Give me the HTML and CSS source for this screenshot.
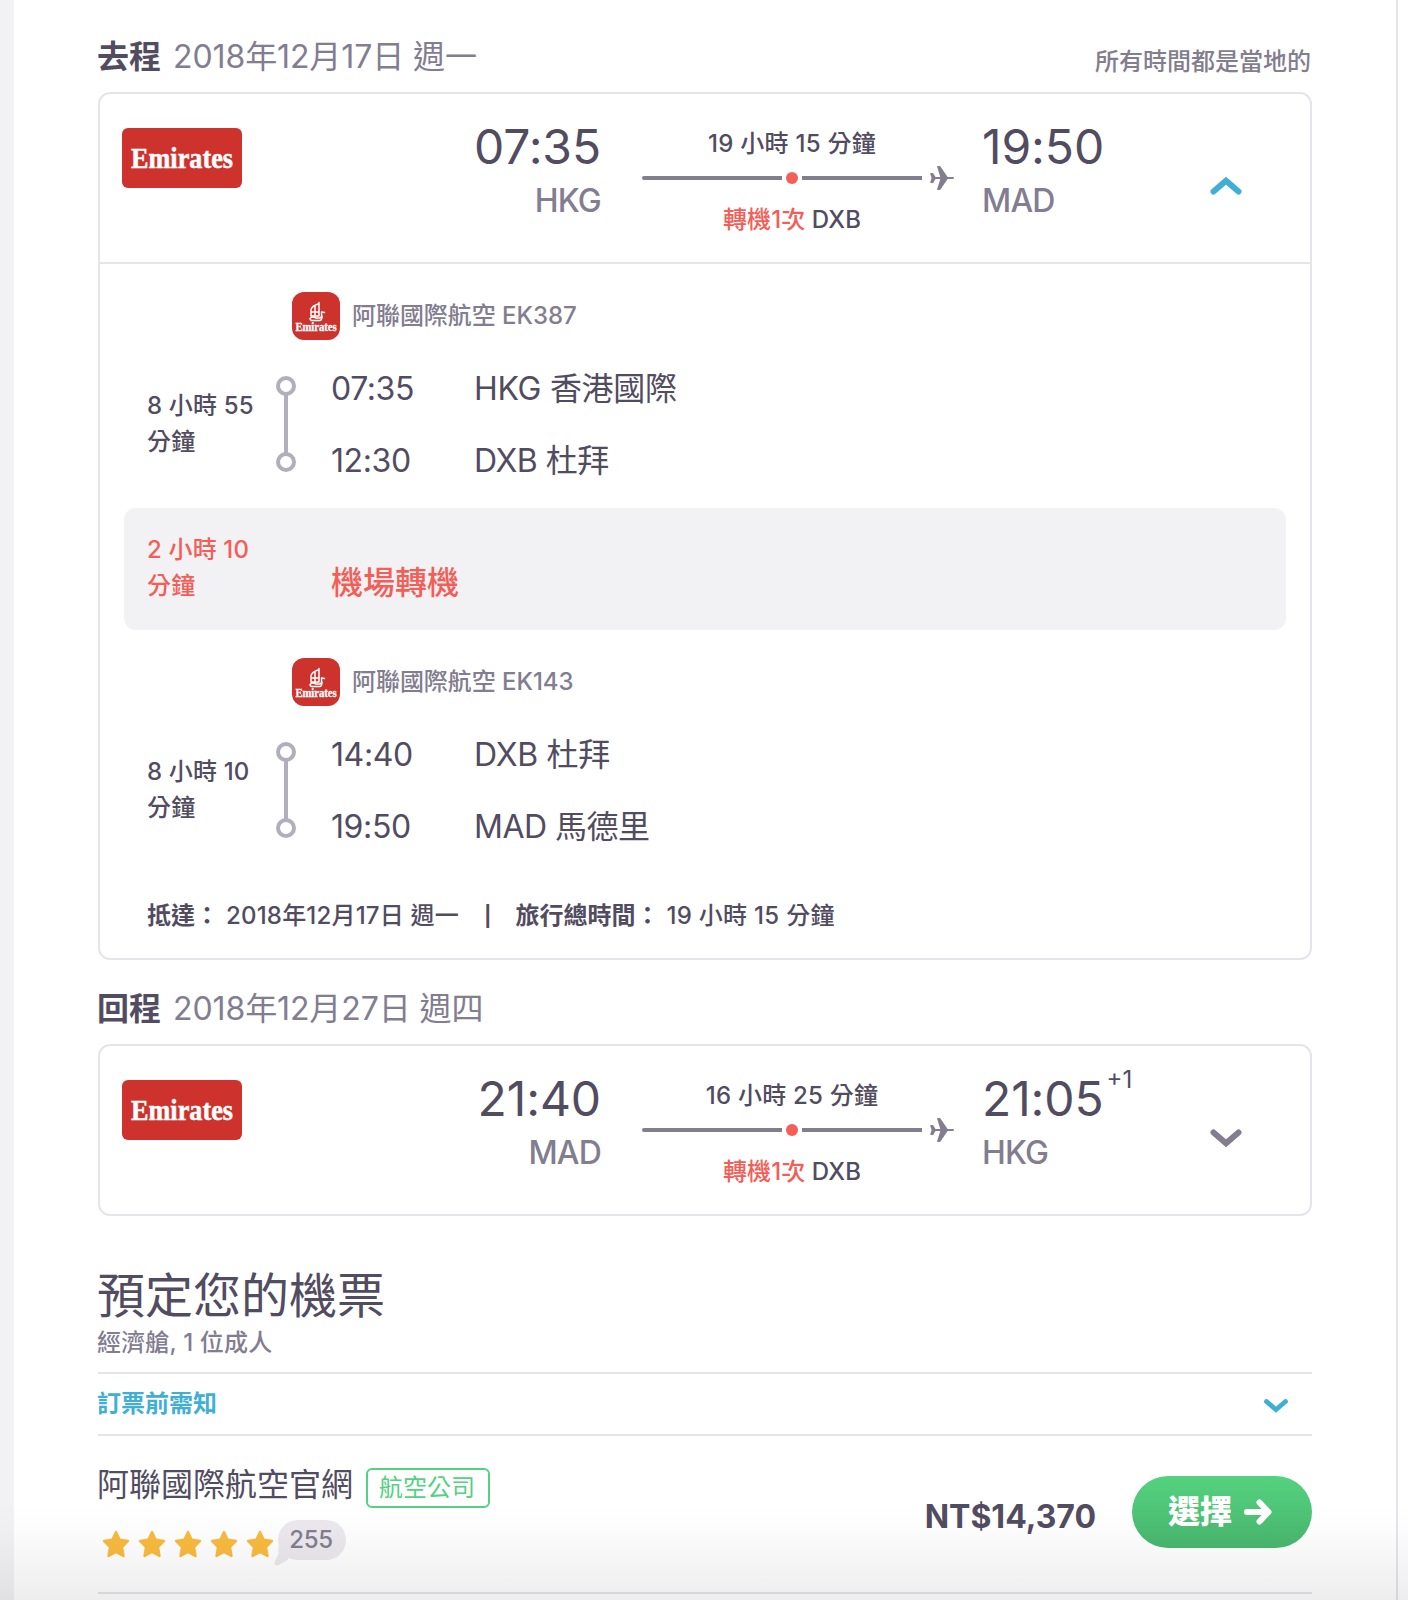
FILE: index.html
```html
<!DOCTYPE html>
<html lang="zh-Hant">
<head>
<meta charset="utf-8">
<title>航班詳情</title>
<link rel="stylesheet" href="styles.css">
</head>
<body>
<svg class="defs" aria-hidden="true">
  <symbol id="plane" viewBox="0 0 24 24"><path d="M23 11H17.600L10.600.700Q10.200 0 9.400 0H8Q6.800 0 7.200 1.100L10.300 11H5.500L3.400 7.600Q3 7 2.300 7H.900Q0 7 .300 7.900L1.600 12L.300 16.100Q0 17 .900 17H2.300Q3 17 3.400 16.400L5.500 13H10.300L7.200 22.900Q6.800 24 8 24H9.400Q10.200 24 10.600 23.300L17.600 13H23Q24 13 24 12T23 11Z" fill="currentColor"/></symbol>
  <symbol id="star" viewBox="0 0 28 28"><path d="M14 2L17.700 9.700L26 11L20 17.100L21.500 26L14 21.900L6.500 26L8 17.100L2 11L10.300 9.700Z" fill="#f9bb3f" stroke="#f9bb3f" stroke-width="2.400" stroke-linejoin="round"/></symbol>
  <symbol id="calligraphy" viewBox="0 0 48 48">
    <g fill="none" stroke="#fff" stroke-width="1.500" stroke-linecap="round" stroke-linejoin="round">
      <path d="M27 10.500V17M26 12Q20 14 19 17.500V20H27V17M19 20V24H27V20M23 14V24M18 26.500Q20 24 24 26H28Q30 26 29.500 20L32.500 20.500M18 26.500Q18 29 22 28.500H28Q30 28 30 24"/>
    </g>
  </symbol>
</svg>

<main class="panel">
  <header class="leg-title">
    <h2 class="leg-heading"><b>去程</b><span>2018年12月17日 週一</span></h2>
    <p class="leg-note">所有時間都是當地的</p>
  </header>

  <section class="card">
    <div class="summary">
      <svg class="logo" viewBox="0 0 120 60"><text class="wordmark" x="9" y="39.500" textLength="102" lengthAdjust="spacingAndGlyphs">Emirates</text></svg>
      <div class="stop stop-from"><div class="clock">07:35</div><div class="code">HKG</div></div>
      <div class="route">
        <div class="route-time">19 小時 15 分鐘</div>
        <div class="track"><i class="bar bar-first"></i><i class="dot"></i><i class="bar bar-second"></i><svg class="plane"><use href="#plane"/></svg></div>
        <div class="route-stops"><em>轉機1次</em> DXB</div>
      </div>
      <div class="stop stop-to"><div class="clock">19:50</div><div class="code">MAD</div></div>
      <svg class="chevron chevron-up" viewBox="0 0 32 18"><path d="M3.500 14.500L16 3.700L28.500 14.500"/></svg>
    </div>

    <div class="details">
      <div class="segment">
        <div class="carrier"><svg class="tile" viewBox="0 0 48 48"><use href="#calligraphy"/><text class="wordmark-small" x="3.500" y="38.500" textLength="41" lengthAdjust="spacingAndGlyphs">Emirates</text></svg>阿聯國際航空 EK387</div>
        <div class="timeline">
          <div class="duration">8 小時 55 分鐘</div>
          <div class="rail"><i></i><i></i></div>
          <div class="places">
            <div class="place"><time>07:35</time><span>HKG 香港國際</span></div>
            <div class="place"><time>12:30</time><span>DXB 杜拜</span></div>
          </div>
        </div>
      </div>
      <div class="transfer"><div class="duration">2 小時 10 分鐘</div><div class="transfer-name">機場轉機</div></div>
      <div class="segment">
        <div class="carrier"><svg class="tile" viewBox="0 0 48 48"><use href="#calligraphy"/><text class="wordmark-small" x="3.500" y="38.500" textLength="41" lengthAdjust="spacingAndGlyphs">Emirates</text></svg>阿聯國際航空 EK143</div>
        <div class="timeline">
          <div class="duration">8 小時 10 分鐘</div>
          <div class="rail"><i></i><i></i></div>
          <div class="places">
            <div class="place"><time>14:40</time><span>DXB 杜拜</span></div>
            <div class="place"><time>19:50</time><span>MAD 馬德里</span></div>
          </div>
        </div>
      </div>
      <div class="totals"><b>抵達：</b><span class="arrive">2018年12月17日 週一</span><b class="pipe">|</b><b>旅行總時間：</b><span>19 小時 15 分鐘</span></div>
    </div>
  </section>

  <header class="leg-title leg-title-return">
    <h2 class="leg-heading"><b>回程</b><span>2018年12月27日 週四</span></h2>
  </header>

  <section class="card">
    <div class="summary">
      <svg class="logo" viewBox="0 0 120 60"><text class="wordmark" x="9" y="39.500" textLength="102" lengthAdjust="spacingAndGlyphs">Emirates</text></svg>
      <div class="stop stop-from"><div class="clock">21:40</div><div class="code">MAD</div></div>
      <div class="route">
        <div class="route-time">16 小時 25 分鐘</div>
        <div class="track"><i class="bar bar-first"></i><i class="dot"></i><i class="bar bar-second"></i><svg class="plane"><use href="#plane"/></svg></div>
        <div class="route-stops"><em>轉機1次</em> DXB</div>
      </div>
      <div class="stop stop-to"><div class="clock">21:05<span class="plus-day">+1</span></div><div class="code">HKG</div></div>
      <svg class="chevron chevron-down" viewBox="0 0 32 18"><path d="M3.500 3.500L16 14.300L28.500 3.500"/></svg>
    </div>
  </section>

  <section class="booking">
    <h1>預定您的機票</h1>
    <p class="cabin">經濟艙, 1 位成人</p>
    <div class="notice"><b>訂票前需知</b><svg class="chevron-small" viewBox="0 0 24 14"><path d="M2.500 2.500L12 10.700L21.500 2.500"/></svg></div>
    <div class="offer">
      <div class="seller">
        <div class="seller-name">阿聯國際航空官網<span class="badge">航空公司</span></div>
        <div class="rating">
          <svg class="star"><use href="#star"/></svg><svg class="star"><use href="#star"/></svg><svg class="star"><use href="#star"/></svg><svg class="star"><use href="#star"/></svg><svg class="star"><use href="#star"/></svg>
          <span class="reviews"><svg class="tail" viewBox="0 0 16 20"><path d="M4.500 0V8L.500 16Q-.500 20 4 19.500L14 13.700L16 0Z" fill="#ebe9ee"/></svg><span>255</span></span>
        </div>
      </div>
      <div class="price">NT$14,370</div>
      <button class="select">選擇<svg class="arrow" viewBox="0 0 28 26"><path d="M3 13H24M15.500 3.500L24.500 13L15.500 22.500"/></svg></button>
    </div>
  </section>
</main>
<div class="fade"></div>
</body>
</html>
```
FILE: styles.css
```css
* { box-sizing: border-box; }
body {
  margin: 0;
  height: 1600px;
  overflow: hidden;
  background: #fff;
  color: #524c61;
  font: 450 24px/36px Inter, "Noto Sans CJK TC", sans-serif;
}
h1, h2, p { margin: 0; font-weight: 400; }
.defs { position: absolute; width: 0; height: 0; }

.panel {
  width: 1398px;
  height: 1600px;
  border-left: 14px solid #f2f2f5;
  border-right: 2px solid #e5e4ea;
  padding: 37px 84px 0;
}

.leg-title { display: flex; justify-content: space-between; height: 55px; }
.leg-title-return { height: 84px; padding-top: 29px; }
.leg-heading { display: flex; gap: 12px; margin-left: -1px; font-size: 32px; line-height: 40px; color: #827d8f; letter-spacing: -.1px; }
.leg-heading b { color: #524c61; letter-spacing: 0; }
.leg-note { margin: 7px 1px 0 0; color: #827d8f; font-weight: 450; }

.card { border: 2px solid #e5e4ea; border-radius: 12px; }
.summary { display: flex; height: 168px; padding: 24px 68px 0 22px; }
.logo { width: 120px; height: 60px; margin-top: 10px; border-radius: 6px; background: #cd332c; }
.wordmark { font: 700 29px "Liberation Serif", serif; fill: #fff; stroke: #fff; stroke-width: .5px; }
.wordmark-small { font: 700 12px "Liberation Serif", serif; fill: #fff; stroke: #fff; stroke-width: .3px; }
.stop-from { width: 360px; padding-right: 1px; text-align: right; }
.stop-to { width: 200px; }
.clock { height: 58px; font-size: 48px; line-height: 58px; letter-spacing: -.1px; font-weight: 430; }
.plus-day { position: relative; top: -28px; margin-left: 3px; font-size: 24px; letter-spacing: 0; line-height: 1; }
.code { font-size: 32px; line-height: 50px; color: #827d8f; letter-spacing: -.8px; }
.route { width: 312px; margin: 8px 28px 0 40px; }
.route-time, .route-stops { width: 300px; text-align: center; letter-spacing: .25px; }
.route-stops { letter-spacing: .1px; }
.track { display: flex; align-items: center; height: 32px; }
.bar { height: 4px; background: #827d8f; }
.bar-first { width: 140px; border-radius: 2px 0 0 2px; }
.bar-second { width: 120px; }
.dot { width: 12px; height: 12px; margin: 0 4px; border-radius: 50%; background: #f55d57; }
.plane { width: 24px; height: 24px; margin-left: 8px; color: #827d8f; }
.route-stops { line-height: 51px; }
.route-stops em { color: #f55d57; font-style: normal; }
.chevron { width: 32px; height: 18px; margin: 59px 0 0 28px; fill: none; stroke: #827d8f; stroke-width: 6; stroke-linecap: round; stroke-linejoin: miter; }
.chevron-up { stroke: #3fb0d3; }

.details { border-top: 2px solid #e5e4ea; padding: 0 24px; height: 696px; }
.segment { height: 244px; padding-top: 28px; }
.carrier { display: flex; align-items: center; gap: 12px; height: 48px; margin-left: 168px; color: #827d8f; letter-spacing: -.05px; }
.tile { width: 48px; height: 48px; border-radius: 12px; background: #cd332c; }
.timeline { display: flex; padding: 13px 0 0 23px; }
.duration { width: 112px; letter-spacing: .15px; }
.timeline .duration { margin-top: 35px; }
.rail { display: flex; flex-direction: column; justify-content: space-between; width: 20px; height: 96px; margin: 23px 35px 0 17px; background: linear-gradient(#b2aebd, #b2aebd) center / 4px 60px no-repeat; }
.rail i { width: 20px; height: 20px; border: 4px solid #b2aebd; border-radius: 50%; background: #fff; }
.place { display: flex; font-size: 32px; line-height: 72px; font-weight: 400; }
.place time { width: 143px; letter-spacing: -.4px; }
.place span { letter-spacing: -.5px; }
.place:first-child span { letter-spacing: -.3px; }
.transfer { display: flex; gap: 72px; height: 122px; padding: 24px 23px; border-radius: 12px; background: #f2f2f5; color: #f55d57; }
.transfer-name { font-size: 32px; line-height: 102px; height: 72px; }
.totals { display: flex; padding: 24px 0 0 23px; letter-spacing: .2px; }
.totals b { letter-spacing: 0; }
.totals span { margin-left: 7px; }
.totals .pipe { margin: 0 24px 0 25px; font-size: 20px; }
.totals span:last-child { letter-spacing: .3px; }

.booking { padding-top: 46px; }
h1 { margin-left: -1px; font-size: 48px; line-height: 67px; }
.cabin { margin-left: -1px; line-height: 27px; height: 43px; color: #827d8f; font-weight: 450; letter-spacing: .15px; }
.notice { display: flex; align-items: center; justify-content: space-between; height: 64px; padding-right: 24px; border: solid #e5e4ea; border-width: 2px 0; color: #3fb0d3; }
.notice b { margin-left: -1px; }
.chevron-small { width: 24px; height: 14px; margin-top: 3px; fill: none; stroke: #3fb0d3; stroke-width: 4.800; stroke-linecap: round; }
.offer { display: flex; height: 158px; border-bottom: 2px solid #e5e4ea; }
.seller { flex: 1; padding-top: 30px; }
.seller-name { display: flex; margin-left: -1px; font-size: 32px; line-height: 38px; height: 54px; font-weight: 400; }
.badge { width: 124px; height: 40px; margin: 2px 0 0 13px; padding-right: 2px; border: 2px solid #54d182; border-radius: 6px; color: #54d182; font-size: 24px; line-height: 36px; text-align: center; }
.rating { display: flex; gap: 8px; padding-left: 4px; }
.star { width: 28px; height: 28px; margin-top: 10px; }
.reviews { position: relative; width: 68px; height: 40px; border-radius: 20px; background: #ebe9ee; color: #827d8f; text-align: center; line-height: 39px; margin-left: -4px; padding-right: 2px; letter-spacing: -.3px; }
.tail { position: absolute; left: -4px; top: 26px; width: 16px; height: 20px; }
.reviews span { position: relative; }
.price { margin: 61px 36px 0 0; font-size: 32px; line-height: 40px; font-weight: 700; letter-spacing: 0; }
.select { display: flex; align-items: center; gap: 12px; width: 180px; height: 72px; margin-top: 40px; padding: 0 0 0 36px; border: 0; border-radius: 36px; background: linear-gradient(#54d27f, #48b66e); color: #fff; font: 800 32px/40px Inter, "Noto Sans CJK TC", sans-serif; }
.arrow { width: 28px; height: 26px; fill: none; stroke: #fff; stroke-width: 6; stroke-linecap: round; stroke-linejoin: round; }

.fade { position: absolute; left: 0; right: 0; top: 1500px; height: 100px; background: linear-gradient(transparent, rgba(0,0,0,.01) 30%, rgba(0,0,0,.07)); pointer-events: none; }
```
